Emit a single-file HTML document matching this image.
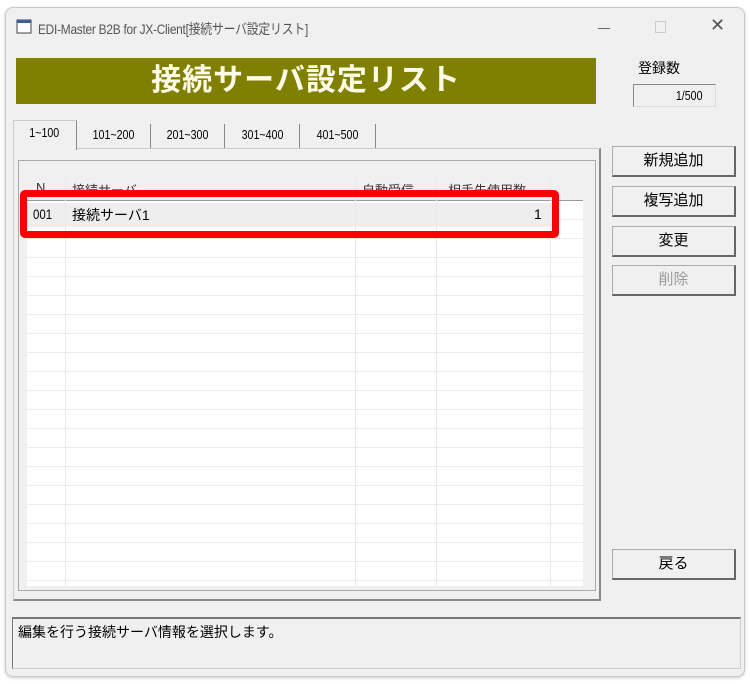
<!DOCTYPE html>
<html><head><meta charset="utf-8"><style>
*{box-sizing:border-box;margin:0;padding:0}
body{width:750px;height:684px;background:#fff;position:relative;overflow:hidden;font-family:"Liberation Sans","Noto Sans CJK JP",sans-serif;color:#000}
.win{position:absolute;left:5px;top:7px;width:740px;height:670px;background:#f0f0f0;border:1px solid #c8c8c8;border-radius:8px;box-shadow:0 1px 3px rgba(0,0,0,.2)}
.title{position:absolute;left:38px;top:19px;font-size:14px;color:#555;letter-spacing:-0.3px;transform:scaleX(.85);transform-origin:left}
.ab{position:absolute}
.banner{position:absolute;left:16px;top:58px;width:580px;height:46px;background:#808000;color:#fffbe8;font-size:30px;font-weight:bold;text-align:center;line-height:46px;letter-spacing:1px}
.btn{position:absolute;left:612px;width:124px;height:31px;background:#f0f0f0;border:1px solid #aaa;border-right:2px solid #666;border-bottom:2px solid #666;font-size:15px;text-align:center;line-height:28px}
.tab{position:absolute;top:124px;height:24px;font-size:13px;line-height:22px;text-align:center;border-right:1px solid #888}
.tab span,.c{display:inline-block;transform:scaleX(.82)}
.list{position:absolute;left:18px;top:160px;width:578px;height:431px;border:1px solid #aaa;background:#f0f0f0}
.grid{position:absolute;left:27px;top:201px;width:556px;height:385px;background:#fff;
background-image:repeating-linear-gradient(to bottom,transparent 0 18px,#ececec 18px 19px)}
.vl{position:absolute;top:180px;width:1px;height:406px;background:#e8e8e8}
.hd{position:absolute;top:180px;font-size:13px;color:#333}
</style></head><body>
<div class="win"></div>
<svg class="ab" style="left:16px;top:19px" width="16" height="15"><rect x="1" y="1" width="14" height="13" fill="#fff" stroke="#444"/><rect x="1" y="1" width="14" height="3" fill="#3a5fa0"/></svg>
<div class="title">EDI-Master B2B for JX-Client[接続サーバ設定リスト]</div>
<div class="ab" style="left:598px;top:28px;width:12px;height:1px;background:#666"></div>
<div class="ab" style="left:655px;top:21px;width:11px;height:12px;border:1px solid #ccc"></div>
<div class="ab" style="left:710px;top:15px;font-size:18px;color:#555">✕</div>
<div class="banner">接続サーバ設定リスト</div>
<div class="ab" style="left:638px;top:58px;font-size:14px">登録数</div>
<div class="ab" style="left:633px;top:84px;width:83px;height:23px;border:1px solid #888;border-right-color:#ddd;border-bottom-color:#ddd;font-size:13px;text-align:right;padding-right:12px;line-height:21px"><span class="c" style="transform-origin:right">1/500</span></div>
<div class="ab" style="left:13px;top:148px;width:588px;height:453px;border:1px solid #ccc;border-right:2px solid #888;border-bottom:2px solid #888"></div>
<div class="ab" style="left:13px;top:120px;width:64px;height:30px;background:#f0f0f0;border:1px solid #ccc;border-bottom:none;border-right:1px solid #888"></div>
<div class="ab" style="left:14px;top:125px;font-size:13px;width:60px;text-align:center"><span class="c">1~100</span></div>
<div class="tab" style="left:77px;width:74px"><span>101~200</span></div>
<div class="tab" style="left:151px;width:74px"><span>201~300</span></div>
<div class="tab" style="left:225px;width:75px"><span>301~400</span></div>
<div class="tab" style="left:300px;width:76px"><span>401~500</span></div>
<div class="list"></div>
<div class="grid"></div>
<div class="ab" style="left:27px;top:200px;width:556px;height:1px;background:#999"></div>
<div class="ab" style="left:27px;top:203px;width:528px;height:24px;background:#eee"></div>
<div class="vl" style="left:65px"></div><div class="vl" style="left:355px"></div><div class="vl" style="left:436px"></div><div class="vl" style="left:550px"></div>
<div class="hd" style="left:36px">N</div><div class="hd" style="left:72px">接続サーバ</div><div class="hd" style="left:362px">自動受信</div><div class="hd" style="left:448px">相手先使用数</div>
<div class="ab" style="left:33px;top:206px;font-size:14px"><span class="c" style="transform-origin:left">001</span></div>
<div class="ab" style="left:72px;top:205px;font-size:14px">接続サーバ1</div>
<div class="ab" style="left:534px;top:206px;font-size:14px">1</div>
<div class="ab" style="left:20px;top:190px;width:539px;height:48px;border:7px solid #f00;border-radius:5px"></div>
<div class="btn" style="top:146px">新規追加</div>
<div class="btn" style="top:186px">複写追加</div>
<div class="btn" style="top:226px">変更</div>
<div class="btn" style="top:265px;color:#999">削除</div>
<div class="btn" style="top:549px">戻る</div>
<div class="ab" style="left:12px;top:617px;width:729px;height:52px;border:1px solid #ccc;border-top:2px solid #777;border-left:1px solid #777"></div>
<div class="ab" style="left:18px;top:622px;font-size:14px">編集を行う接続サーバ情報を選択します。</div>
</body></html>
